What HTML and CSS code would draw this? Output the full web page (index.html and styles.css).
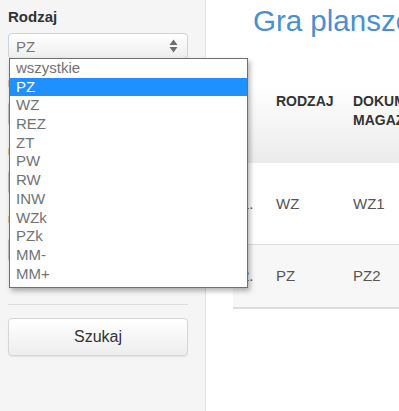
FILE: index.html
```html
<!DOCTYPE html>
<html lang="pl">
<head>
<meta charset="utf-8">
<title>Gra planszowa</title>
<link rel="stylesheet" href="styles.css">
</head>
<body>
<div class="layout">
  <aside class="sidebar">
    <label class="field-label">Rodzaj</label>
    <div class="select">
      <span class="select-value">PZ</span>
      <svg class="select-arrows" width="9" height="14" viewBox="0 0 9 14"><path d="M4.5 0.5 L8.5 6 L0.5 6 Z" fill="#6a6f75"/><path d="M0.5 8 L8.5 8 L4.5 13.5 Z" fill="#6a6f75"/></svg>
    </div>
    <ul class="dropdown">
      <li class="option">wszystkie</li>
      <li class="option selected">PZ</li>
      <li class="option">WZ</li>
      <li class="option">REZ</li>
      <li class="option">ZT</li>
      <li class="option">PW</li>
      <li class="option">RW</li>
      <li class="option">INW</li>
      <li class="option">WZk</li>
      <li class="option">PZk</li>
      <li class="option">MM-</li>
      <li class="option">MM+</li>
    </ul>
    <div class="group">
      <div class="hidden-label"></div>
      <div class="input"></div>
    </div>
    <div class="group">
      <div class="hidden-label"></div>
      <div class="input"></div>
    </div>
    <div class="group">
      <div class="hidden-label"></div>
      <div class="input"></div>
    </div>
    <hr class="divider">
    <button class="btn">Szukaj</button>
  </aside>
  <main class="main">
    <h1 class="title">Gra planszowa</h1>
    <table class="table">
      <thead>
        <tr>
          <th class="col-num"></th>
          <th class="col-type">RODZAJ</th>
          <th class="col-doc">DOKUMENT<br>MAGAZYNOWY</th>
        </tr>
      </thead>
      <tbody>
        <tr class="row-a">
          <td>1.</td>
          <td>WZ</td>
          <td>WZ1</td>
        </tr>
        <tr class="row-b">
          <td>2.</td>
          <td>PZ</td>
          <td>PZ2</td>
        </tr>
      </tbody>
    </table>
  </main>
</div>
</body>
</html>
```

FILE: styles.css
```css
html, body {
  margin: 0;
  padding: 0;
  height: 411px;
  overflow: hidden;
  background: #fff;
  font-family: "Liberation Sans", Arial, sans-serif;
}

.layout {
  display: flex;
  height: 411px;
}

.sidebar {
  position: relative;
  box-sizing: border-box;
  width: 206px;
  flex: none;
  padding: 8px 17px 0 8px;
  background: #f5f5f5;
  border-right: 1px solid #dde3ea;
}

.field-label {
  display: block;
  font-size: 15px;
  font-weight: bold;
  color: #333;
  line-height: 18px;
  margin: 0 0 7px;
}

.hidden-label {
  height: 18px;
  margin-bottom: 9px;
  box-sizing: border-box;
  padding-top: 6px;
}

.hidden-label::before {
  content: "";
  display: block;
  width: 1px;
  height: 7px;
  background: #dcc89a;
}

.select {
  box-sizing: border-box;
  height: 26px;
  display: flex;
  align-items: center;
  justify-content: space-between;
  padding: 0 9px 0 7px;
  border: 1px solid #cbd3db;
  border-radius: 4px;
  background: linear-gradient(#ffffff, #eeeeee);
}

.select-value {
  font-size: 15px;
  color: #777;
}

.select-arrows {
  display: block;
}

.dropdown {
  position: absolute;
  left: 9px;
  top: 58px;
  width: 239px;
  box-sizing: border-box;
  margin: 0;
  padding: 0 0 4px;
  list-style: none;
  background: #fff;
  border: 1px solid #707070;
  box-shadow: 2px 3px 5px rgba(0, 0, 0, 0.3);
  z-index: 10;
}

.option {
  height: 18.7px;
  line-height: 18.7px;
  padding-left: 6px;
  font-size: 15px;
  color: #6e7378;
}

.option.selected {
  background: #1e90ff;
  color: #fff;
}

.group {
  margin-top: 15px;
}

.input {
  height: 26px;
  box-sizing: border-box;
  border: 1px solid #c6c6c6;
  border-radius: 4px;
  background: #fff;
}

.divider {
  border: 0;
  border-top: 1px solid #dcdcdc;
  margin: 41px 0 13px;
}

.btn {
  display: block;
  width: 180px;
  height: 38px;
  box-sizing: border-box;
  border: 1px solid #d6d6d6;
  border-radius: 4px;
  background: linear-gradient(#ffffff, #ededed);
  box-shadow: 0 1px 1px rgba(0, 0, 0, 0.08);
  font-family: "Liberation Sans", Arial, sans-serif;
  font-size: 16px;
  color: #333;
  padding: 0;
}

.main {
  flex: 1;
  padding-left: 27px;
  overflow: hidden;
}

.title {
  margin: 0 0 0 20px;
  padding-top: 3px;
  font-size: 29.5px;
  line-height: 36px;
  font-weight: normal;
  color: #4a8fd0;
  white-space: nowrap;
}

.table {
  margin-top: 26px;
  width: 420px;
  border-collapse: collapse;
  font-size: 15px;
  color: #555;
}

.table thead tr {
  background: linear-gradient(#ffffff 20%, #ebebeb);
}

.table th {
  text-align: left;
  font-size: 14px;
  font-weight: bold;
  color: #333;
  line-height: 19px;
  padding: 27px 8px 33px;
  vertical-align: top;
  white-space: nowrap;
}

.table td {
  line-height: 20px;
  padding: 0 8px;
  white-space: nowrap;
}

.col-num { width: 19px; }
.col-type { width: 61px; }

.row-a td {
  height: 81px;
  background: #fff;
  border-bottom: 1px solid #dddddd;
}

.row-b td {
  height: 62px;
  background: #f7f7f7;
  border-bottom: 2px solid #dddddd;
}
```
